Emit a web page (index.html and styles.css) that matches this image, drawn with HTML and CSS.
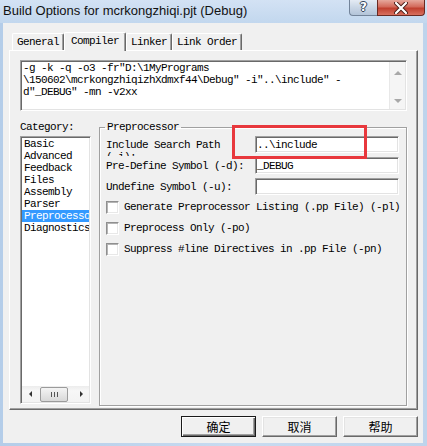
FILE: index.html
```html
<!DOCTYPE html>
<html lang="zh-CN">
<head>
    <meta charset="UTF-8">
    <title>Build Options</title>
    <link rel="stylesheet" href="styles.css">
</head>
<body>
<div class="window">
    <div class="titlebar">
        <span class="title">Build Options for mcrkongzhiqi.pjt (Debug)</span>
        <div class="caption">
            <div class="cap-help">?</div>
            <div class="cap-close">
                <svg width="14" height="12" viewBox="0 0 14 12">
                    <path d="M2 1 L12 11 M12 1 L2 11" stroke="#4a1e18" stroke-width="4" stroke-linecap="round"/>
                    <path d="M2 1 L12 11 M12 1 L2 11" stroke="#ffffff" stroke-width="2.2" stroke-linecap="round"/>
                </svg>
            </div>
        </div>
    </div>
    <div class="client">
        <div class="tabs">
            <div class="tab">General</div>
            <div class="tab active">Compiler</div>
            <div class="tab">Linker</div>
            <div class="tab">Link Order</div>
        </div>
        <div class="panel">
            <div class="cmdline">
                <div class="cmd-text">-g -k -q -o3 -fr"D:\1MyPrograms<br>\150602\mcrkongzhiqizhXdmxf44\Debug" -i"..\include" -<br>d"_DEBUG" -mn -v2xx</div>
                <div class="vscroll">
                    <span class="arr-up"></span>
                    <span class="arr-down"></span>
                </div>
            </div>
            <div class="lower">
                <div class="category">
                    <div class="cat-label">Category:</div>
                    <div class="listbox">
                        <ul class="cat-list">
                            <li>Basic</li>
                            <li>Advanced</li>
                            <li>Feedback</li>
                            <li>Files</li>
                            <li>Assembly</li>
                            <li>Parser</li>
                            <li class="selected">Preprocessor</li>
                            <li>Diagnostics</li>
                        </ul>
                        <div class="hscroll">
                            <div class="hs-btn"><span class="arr-left"></span></div>
                            <div class="hs-thumb">
                                <svg width="7" height="5" viewBox="0 0 7 5">
                                    <path d="M0.5 0 V5 M3.5 0 V5 M6.5 0 V5" stroke="#555" stroke-width="1"/>
                                </svg>
                            </div>
                            <div class="hs-track"></div>
                            <div class="hs-btn"><span class="arr-right"></span></div>
                        </div>
                    </div>
                </div>
                <fieldset class="group">
                    <legend>Preprocessor</legend>
                    <div class="fields">
                        <div class="field-label wrap">Include Search Path (-i):</div>
                        <div class="edit">..\include</div>
                        <div class="field-label">Pre-Define Symbol (-d):</div>
                        <div class="edit">_DEBUG</div>
                        <div class="field-label">Undefine Symbol (-u):</div>
                        <div class="edit"></div>
                    </div>
                    <div class="checks">
                        <div class="check"><span class="box"></span>Generate Preprocessor Listing (.pp File) (-pl)</div>
                        <div class="check"><span class="box"></span>Preprocess Only (-po)</div>
                        <div class="check"><span class="box"></span>Suppress #line Directives in .pp File (-pn)</div>
                    </div>
                </fieldset>
            </div>
        </div>
        <div class="buttons">
            <div class="btn default">确定</div>
            <div class="btn">取消</div>
            <div class="btn">帮助</div>
        </div>
    </div>
    <div class="mark"></div>
</div>
</body>
</html>
```
FILE: styles.css
```css
*{
    margin: 0;
    padding: 0;
    box-sizing: border-box;
}
html, body{
    width: 427px;
    height: 446px;
    overflow: hidden;
}
body{
    font-family: "Liberation Mono", "Noto Sans CJK SC", monospace;
    font-size: 11px;
    letter-spacing: -0.6px;
    color: #000;
}
ul{
    list-style-type: none;
}
.window{
    position: relative;
    width: 427px;
    height: 446px;
    display: flex;
    flex-direction: column;
    background: linear-gradient(to right, #b4cde9, #c8dbf0 55%, #bed4ec);
}

/* title bar */
.titlebar{
    height: 23px;
    display: flex;
    align-items: flex-start;
    background: linear-gradient(#d3e2f4, #c2d7ee);
}
.title{
    font-family: "Liberation Sans", sans-serif;
    font-size: 13px;
    letter-spacing: 0;
    line-height: 22px;
    padding-left: 3px;
    color: #111;
}
.caption{
    margin-left: auto;
    margin-right: 2px;
    display: flex;
}
.cap-help{
    width: 28px;
    height: 16px;
    border: 1px solid #73849a;
    border-top: none;
    border-right: none;
    border-radius: 0 0 0 4px;
    background: linear-gradient(#e4ebf4, #c9d6e5 50%, #b3c4d9);
    font-family: "DejaVu Sans", sans-serif;
    font-weight: bold;
    font-size: 12px;
    letter-spacing: 0;
    line-height: 14px;
    text-align: center;
    color: #fff;
    text-shadow: 0 0 1px #34465c, 1px 0 0 #34465c, -1px 0 0 #34465c, 0 1px 0 #34465c, 0 -1px 0 #34465c;
}
.cap-close{
    width: 48px;
    height: 16px;
    border: 1px solid #6a2a22;
    border-top: none;
    border-radius: 0 0 4px 0;
    background: linear-gradient(#e6a89c, #d36a5b 45%, #c0402f 55%, #d8705f);
    display: flex;
    align-items: center;
    justify-content: center;
}

/* dialog body */
.client{
    height: 420px;
    margin: 0 4px 3px 3px;
    background: #f0f0f0;
    padding: 9px 5px 0 6px;
}
.tabs{
    height: 18px;
    margin-left: 3px;
    display: flex;
    align-items: flex-end;
}
.tab{
    height: 17px;
    line-height: 17px;
    padding: 0 4px;
    border: 1px solid #fff;
    border-bottom: none;
    border-right-color: #696969;
    border-radius: 2px 2px 0 0;
    box-shadow: inset -1px 0 #a0a0a0;
    white-space: nowrap;
}
.tab.active{
    position: relative;
    z-index: 1;
    height: 19px;
    line-height: 17px;
    margin-bottom: -1px;
    padding: 0 6px;
    background: #f0f0f0;
}
.panel{
    height: 360px;
    border: 1px solid #fff;
    border-right-color: #696969;
    border-bottom-color: #696969;
    box-shadow: inset -1px -1px #a0a0a0;
    padding: 9px 10px 0 10px;
}

/* command line box */
.cmdline{
    height: 51px;
    display: flex;
    background: #fff;
    border: 1px solid;
    border-color: #a0a0a0 #fff #fff #a0a0a0;
    box-shadow: inset 1px 1px #696969, inset -1px -1px #e3e3e3;
    padding: 1px;
}
.cmd-text{
    flex: 1;
    line-height: 12px;
    padding-left: 1px;
    white-space: nowrap;
    overflow: hidden;
}
.vscroll{
    width: 16px;
    background: #f5f5f5;
    border-left: 1px solid #e8e8e8;
    display: flex;
    flex-direction: column;
    justify-content: space-between;
    align-items: center;
    padding: 9px 0 6px;
}
.arr-up{
    border-left: 4px solid transparent;
    border-right: 4px solid transparent;
    border-bottom: 4px solid #a8a8a8;
}
.arr-down{
    border-left: 4px solid transparent;
    border-right: 4px solid transparent;
    border-top: 4px solid #a8a8a8;
}

/* lower part */
.lower{
    margin-top: 10px;
    display: flex;
    gap: 8px;
}
.category{
    width: 71px;
}
.cat-label{
    line-height: 12px;
}
.listbox{
    margin-top: 3px;
    height: 268px;
    background: #fff;
    border: 1px solid;
    border-color: #a0a0a0 #fff #fff #a0a0a0;
    box-shadow: inset 1px 1px #696969, inset -1px -1px #e3e3e3;
    padding: 1px;
    display: flex;
    flex-direction: column;
}
.cat-list{
    flex: 1;
}
.cat-list li{
    height: 12px;
    line-height: 12px;
    padding-left: 2px;
    white-space: nowrap;
    overflow: hidden;
}
.cat-list .selected{
    background: #3399ff;
    color: #fff;
}
.hscroll{
    height: 16px;
    display: flex;
    align-items: center;
    background: linear-gradient(#ececec, #f7f7f7 30%, #f3f3f3);
}
.hs-btn{
    width: 16px;
    height: 16px;
    display: flex;
    align-items: center;
    justify-content: center;
}
.arr-left{
    border-top: 3px solid transparent;
    border-bottom: 3px solid transparent;
    border-right: 3px solid #333;
}
.arr-right{
    border-top: 3px solid transparent;
    border-bottom: 3px solid transparent;
    border-left: 3px solid #333;
}
.hs-thumb{
    width: 28px;
    height: 15px;
    margin-left: 2px;
    border: 1px solid #9b9b9b;
    border-radius: 2px;
    background: linear-gradient(#f4f4f4, #e6e6e6 50%, #d8d8d8);
    display: flex;
    align-items: center;
    justify-content: center;
}
.hs-track{
    flex: 1;
}

/* group box */
.group{
    width: 308px;
    height: 285px;
    border: 1px solid #a0a0a0;
    box-shadow: inset 1px 1px #fff, 1px 1px #fff;
    padding: 3px 6px 0 6px;
}
.group legend{
    margin-left: -1px;
    padding: 0 2px;
    line-height: 12px;
}
.fields{
    display: grid;
    grid-template-columns: 149px 144px;
    grid-auto-rows: 17px;
    row-gap: 4px;
}
.field-label{
    padding-top: 3px;
    line-height: 12px;
    white-space: nowrap;
}
.field-label.wrap{
    width: 130px;
    height: 20px;
    overflow: hidden;
    white-space: normal;
}
.edit{
    height: 17px;
    background: #fff;
    border: 1px solid;
    border-color: #a0a0a0 #fff #fff #a0a0a0;
    box-shadow: inset 1px 1px #696969, inset -1px -1px #e3e3e3;
    padding: 2px 1px 0;
    line-height: 12px;
    white-space: nowrap;
}
.checks{
    margin-top: 6px;
    display: flex;
    flex-direction: column;
    gap: 8px;
}
.check{
    display: flex;
    align-items: center;
    gap: 5px;
    line-height: 13px;
    white-space: nowrap;
}
.box{
    width: 13px;
    height: 13px;
    background: #fff;
    border: 1px solid;
    border-color: #8f8f8f #fff #fff #8f8f8f;
    box-shadow: inset 1px 1px #b4b4b4, inset -1px -1px #e8e8e8;
}

/* buttons */
.buttons{
    margin-top: 6px;
    display: flex;
    justify-content: flex-end;
    gap: 6px;
}
.btn{
    width: 75px;
    height: 21px;
    border: 1px solid;
    border-color: #fff #696969 #696969 #fff;
    box-shadow: inset -1px -1px #a0a0a0, inset 1px 1px #e3e3e3;
    background: #f0f0f0;
    font-family: "Noto Sans CJK SC", sans-serif;
    font-size: 12px;
    letter-spacing: 0;
    line-height: 19px;
    text-align: center;
}
.btn.default{
    border: 1px solid #1a1a1a;
    box-shadow: inset 1px 1px #fff, inset -1px -1px #696969, inset -2px -2px #a0a0a0;
}

/* red highlight drawn over the screenshot */
.mark{
    position: absolute;
    left: 232px;
    top: 125px;
    width: 135px;
    height: 34px;
    border: 3px solid #e8383d;
}
```
